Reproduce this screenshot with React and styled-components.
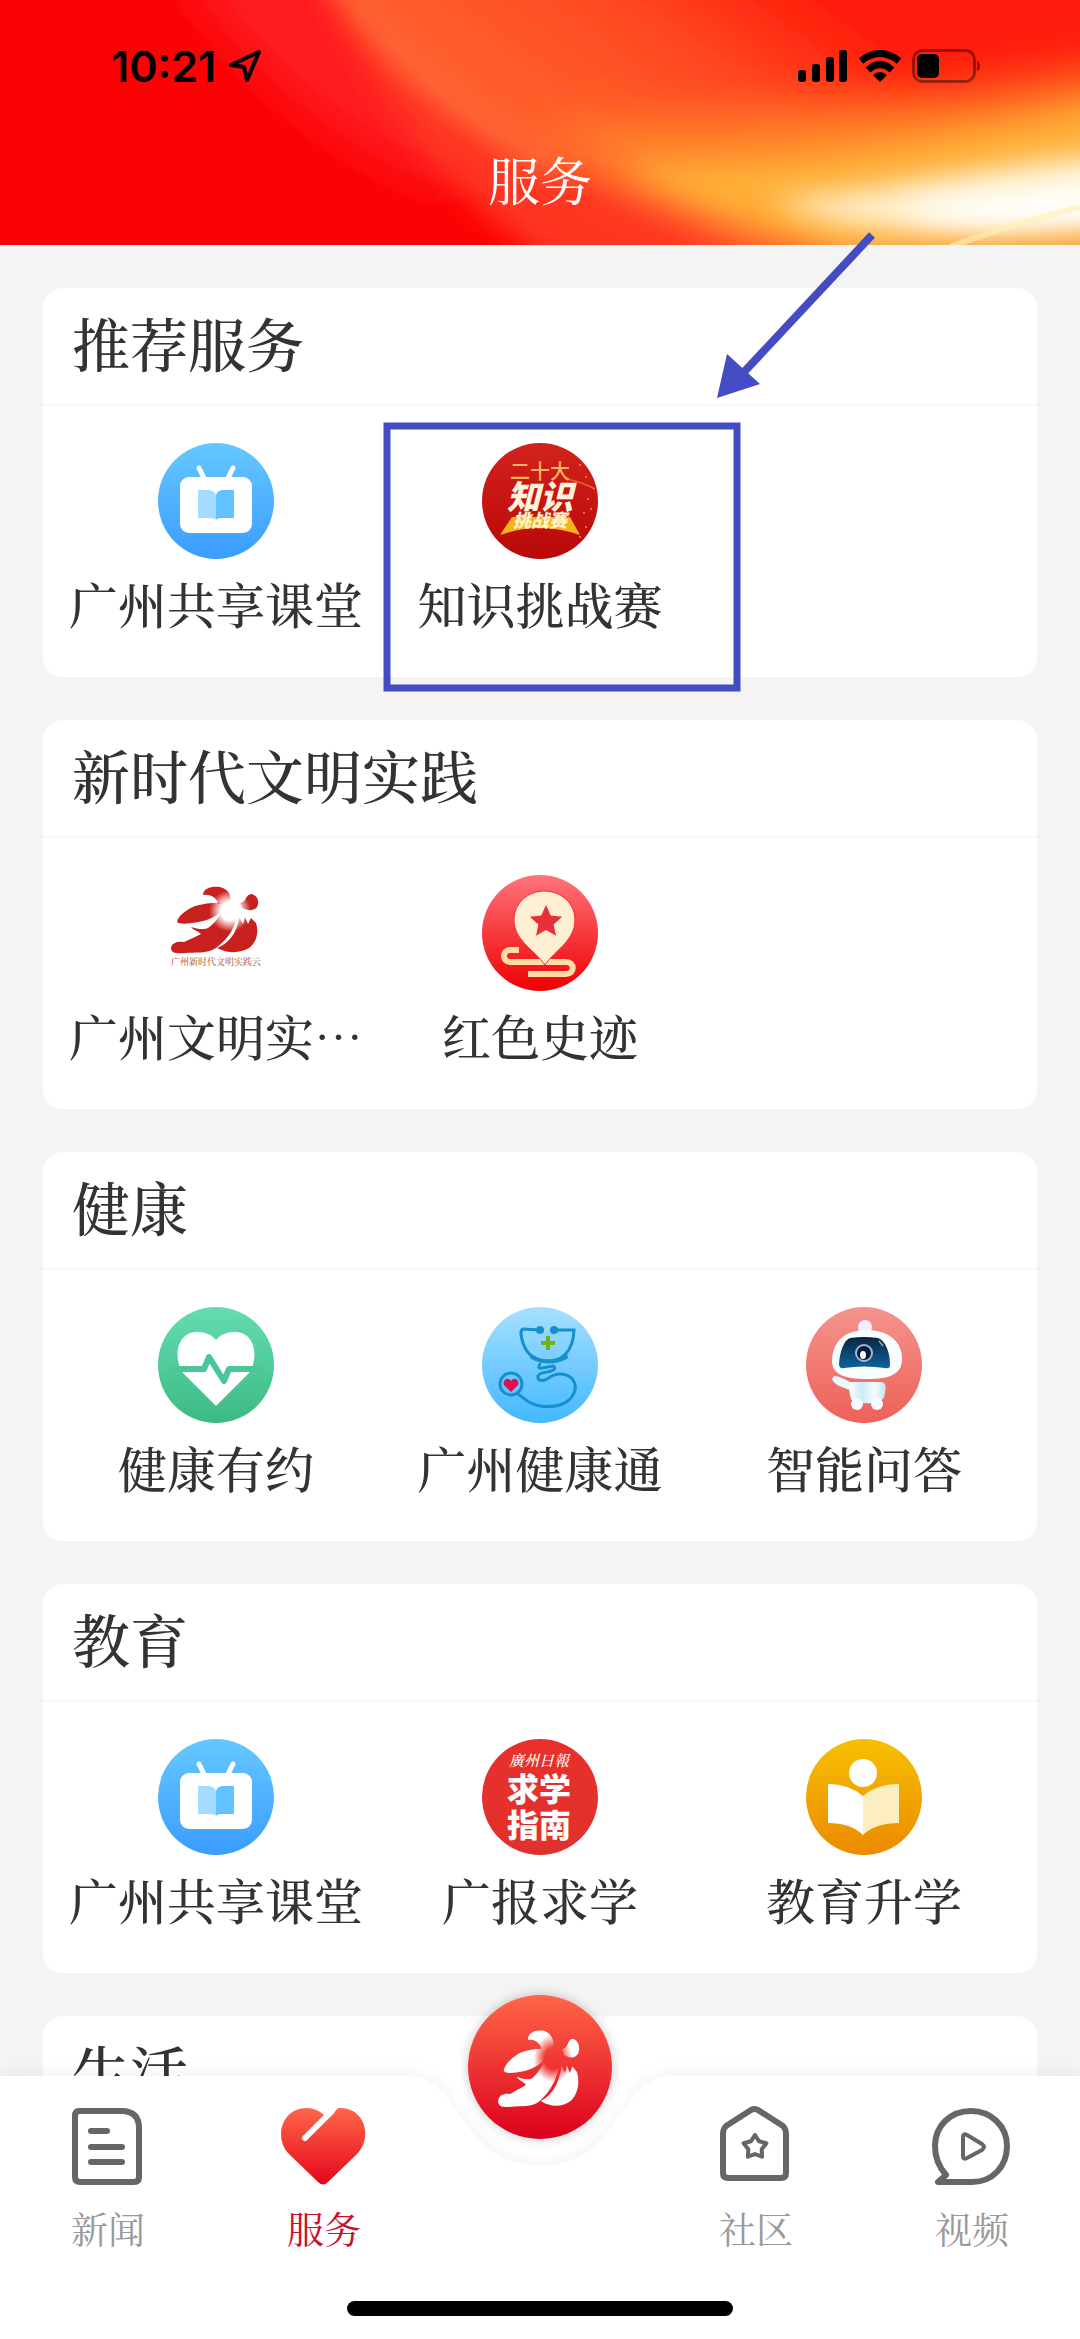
import React from 'react';
import styled, { createGlobalStyle } from 'styled-components';

const song =
	"'Noto Serif CJK SC', 'Source Han Serif SC', 'Songti SC', 'Noto Sans CJK SC', serif";
const hei = "'Noto Sans CJK SC', sans-serif";

const colors = {
	page: '#f4f4f4',
	card: '#fff',
	line: '#f7f7f7',
	text: '#333',
	muted: '#999',
	icon: '#666',
	active: '#c8102e',
	marker: '#444cc4',
};

const GlobalStyle = createGlobalStyle`
	* {
		box-sizing: border-box;
	}
	body {
		margin: 0;
		background: ${colors.page};
		font-family: ${song};
		font-weight: 500;
		color: ${colors.text};
	}
	button {
		border: 0;
		padding: 0;
		background: none;
		font: inherit;
		color: inherit;
	}
`;

const Page = styled.div`
	position: relative;
	height: 100vh;
	overflow: hidden;
`;

const Scroller = styled.div`
	height: 100%;
	overflow-y: auto;
	scrollbar-width: none;
`;

const Header = styled.header`
	position: relative;
	z-index: 0;
	padding: 44px 99px 36px 111px;
	background: #fb0202;
`;

const HeaderArt = styled.svg`
	position: absolute;
	z-index: -1;
	inset: 0;
	width: 100%;
	height: 100%;
`;

const StatusBar = styled.div`
	display: flex;
	align-items: center;
	justify-content: space-between;
	height: 44px;
	color: #000;
`;

const StatusGroup = styled.div`
	display: flex;
	align-items: center;
	gap: 11px;
`;

const Clock = styled.span`
	font: 600 43px/44px Inter, sans-serif;
`;

const PageTitle = styled.h1`
	margin: 61px 0 0 -12px;
	font-size: 52px;
	font-weight: 400;
	line-height: 60px;
	text-align: center;
	color: #fff;
`;

const Main = styled.main`
	display: flex;
	flex-direction: column;
	gap: 43px;
	padding: 43px;
`;

const Card = styled.section`
	min-height: 389px;
	border-radius: 20px;
	background: ${colors.card};
`;

const CardTitle = styled.h2`
	margin: 0;
	padding: 16px 29px 24px;
	font-size: 58px;
	font-weight: 500;
	line-height: 76px;
`;

const ServiceGrid = styled.div`
	display: grid;
	grid-template-columns: repeat(3, 1fr);
	border-top: 2px solid ${colors.line};
	padding: 37px 11px 44px;
`;

const ServiceCell = styled.div`
	position: relative;
	display: flex;
	justify-content: center;
`;

const ServiceButton = styled.button`
	display: flex;
	flex-direction: column;
	align-items: center;
	gap: 14px;
	font-size: 49px;
	line-height: 60px;
	white-space: nowrap;
`;

const ServiceIcon = styled.svg`
	display: block;
	width: 116px;
	height: 116px;
`;

const Marker = styled.svg`
	position: absolute;
	z-index: 1;
	left: 4px;
	top: -212px;
	width: 500px;
	height: 462px;
	pointer-events: none;
`;

const TabBar = styled.nav`
	position: absolute;
	z-index: 2;
	left: 0;
	right: 0;
	bottom: 0;
`;

const TabBackdrop = styled.div`
	position: absolute;
	z-index: -1;
	inset: 0;
	display: flex;
	filter: drop-shadow(0 -2px 8px rgba(0, 0, 0, 0.05));
`;

const BackdropSide = styled.div`
	flex: 1;
	background: ${colors.card};
`;

const TabList = styled.div`
	display: grid;
	grid-template-columns: repeat(5, 1fr);
	padding-top: 28px;
`;

const Tab = styled.button`
	display: flex;
	flex-direction: column;
	align-items: center;
	gap: 16px;
	font-size: 37px;
	font-weight: 400;
	line-height: 44px;
	color: ${props => (props.$active ? colors.active : colors.muted)};
`;

const CenterButton = styled.button`
	justify-self: center;
	width: 144px;
	height: 144px;
	margin-top: -109px;
	border-radius: 50%;
	box-shadow: 0 0 12px rgba(0, 0, 0, 0.22);
`;

const HomeIndicator = styled.div`
	width: 386px;
	height: 15px;
	margin: 51px auto 23px;
	border-radius: 8px;
	background: #000;
`;

const Gradient = ({ id, from, to }) => (
	<linearGradient id={id} x1='0' y1='0' x2='0' y2='1'>
		<stop offset='0' stopColor={from} />
		<stop offset='1' stopColor={to} />
	</linearGradient>
);

const Disc = ({ id, from, to }) => (
	<>
		<defs>
			<Gradient id={id} from={from} to={to} />
		</defs>
		<circle cx='58' cy='58' r='58' fill={`url(#${id})`} />
	</>
);

const starPoints = (cx, cy, outer, inner) =>
	Array.from({ length: 10 }, (_, i) => {
		const r = i % 2 ? inner : outer;
		const a = (Math.PI / 5) * i - Math.PI / 2;
		return `${(cx + r * Math.cos(a)).toFixed(1)},${(cy + r * Math.sin(a)).toFixed(1)}`;
	}).join(' ');

// kapok blossom, petals fade out towards the heart of the flower
const Kapok = ({ id, color }) => (
	<>
		<defs>
			<radialGradient id={id} gradientUnits='userSpaceOnUse' cx='72' cy='36' r='26'>
				<stop offset='0.35' stopColor={color} stopOpacity='0' />
				<stop offset='0.8' stopColor={color} />
			</radialGradient>
		</defs>
		<g fill={`url(#${id})`}>
			<path d='M45 20C45 13 54 11 62 12C70 14 74 20 72 27L60 29C59 23 53 19 45 20Z' />
			<path d='M82 28C89 27 87 20 93 19C99 20 102 26 99 32C96 36 90 36 84 33Z' />
			<path d='M19 47C20 41 28 35 37 31C47 28 58 27 68 28L62 38C54 44 44 47 34 48C27 49 21 49 19 47Z' />
			<path d='M33 52C39 54 46 55 50 53C57 48 60 43 63 38L78 44C76 54 70 64 58 73C48 79 38 77 27 78C19 79 13 78 13 73C14 67 21 66 26 67C32 64 38 62 43 59C40 56 35 55 33 52Z' />
			<path d='M81 42L85 49L87 42L90 49L93 43L98 48C101 57 99 67 91 73C83 78 70 79 59 73C69 69 79 60 81 42Z' />
		</g>
	</>
);

const TvIcon = ({ id }) => (
	<ServiceIcon viewBox='0 0 116 116' aria-hidden='true'>
		<Disc id={id} from='#66c8ff' to='#3a9cff' />
		<path
			d='M41 25L47 37M75 25L69 37'
			stroke='#fff'
			strokeWidth='5'
			strokeLinecap='round'
		/>
		<rect x='22' y='34' width='72' height='56' rx='9' fill='#fff' />
		<path d='M40 47H52Q57 48 58 52V77Q57 75 52 75H40Z' fill='#a3dcff' />
		<path d='M76 47H64Q59 48 58 52V77Q59 75 64 75H76Z' fill='#62c1ff' />
	</ServiceIcon>
);

const ChallengeIcon = () => (
	<ServiceIcon viewBox='0 0 116 116' aria-hidden='true'>
		<Disc id='challenge' from='#d4221c' to='#b80808' />
		<path d='M85 36Q100 39 113 46' stroke='#e8643c' strokeWidth='1.5' fill='none' />
		<g fill='#f08a4a'>
			<circle cx='98' cy='22' r='1' />
			<circle cx='104' cy='34' r='1' />
			<circle cx='106' cy='56' r='1' />
			<circle cx='109' cy='66' r='1' />
			<circle cx='102' cy='70' r='1' />
			<circle cx='104' cy='84' r='1' />
			<circle cx='98' cy='94' r='1' />
		</g>
		<path d='M30 74H88L98 92Q58 78 18 92Z' fill='#f6b21c' />
		<g textAnchor='middle' fontFamily={hei}>
			<text x='58' y='36' fontSize='20' fontWeight='500' fill='#f7b562'>
				二十大
			</text>
			<text x='58' y='66' fontSize='33' fontWeight='900' fontStyle='italic' fill='#fff3dc'>
				知识
			</text>
			<text x='58' y='84' fontSize='18' fontWeight='900' fontStyle='italic' fill='#fff3c8'>
				挑战赛
			</text>
		</g>
	</ServiceIcon>
);

const CivilIcon = () => (
	<ServiceIcon viewBox='0 0 116 116' aria-hidden='true'>
		<Kapok id='kapok-red' color='#c8201c' />
		<text x='58' y='90' fontSize='9' fill='#b8643c' textAnchor='middle' fontFamily={song}>
			广州新时代文明实践云
		</text>
	</ServiceIcon>
);

const HistoryIcon = () => (
	<ServiceIcon viewBox='0 0 116 116' aria-hidden='true'>
		<Disc id='history' from='#ff747a' to='#ee0004' />
		<path
			d='M37 75H28C20 75 20 87 28 87H84C93 87 93 99 84 99H46'
			fill='none'
			stroke='#ffdca4'
			strokeWidth='6'
		/>
		<path
			d='M63 90C54 76 32 66 32 45C32 28 46 16 62 16C79 16 93 28 93 45C93 66 72 76 63 90Z'
			fill='#ffefd2'
			stroke='#f42a2e'
			strokeWidth='1'
		/>
		<polygon points={starPoints(64, 47, 17, 8)} fill='#e83038' />
	</ServiceIcon>
);

const HeartbeatIcon = () => (
	<ServiceIcon viewBox='0 0 116 116' aria-hidden='true'>
		<Disc id='heartbeat' from='#64dcb0' to='#3cba84' />
		<path
			d='M58 99L25 66C15 52 18 25 39 25C48 25 54 28 58 33C62 28 68 25 77 25C98 25 101 52 91 66Z'
			fill='#fff'
		/>
		<path
			d='M16 62H46L51 50L66 74L71 62H100'
			fill='none'
			stroke='#4ac698'
			strokeWidth='6'
			strokeLinejoin='round'
		/>
	</ServiceIcon>
);

const StethoscopeIcon = () => (
	<ServiceIcon viewBox='0 0 116 116' aria-hidden='true'>
		<Disc id='stethoscope' from='#a6e0ff' to='#44b8ff' />
		<g fill='none' stroke='#1490cc' strokeWidth='3' strokeLinecap='round'>
			<path d='M58 23L41 22C38 23 39 30 41 36C45 48 54 54 66 54C80 54 91 45 92 23L72 23' />
			<path d='M50 50C60 56 74 56 84 50' strokeWidth='4' />
			<path d='M58 57C56 60 56 62 60 61L71 59C74 60 73 63 69 64C64 66 57 65 56 69C55 74 60 74 63 73C69 70 72 66 79 67C90 68 96 76 92 86C87 98 72 101 58 99C48 98 42 91 36 87' />
			<circle cx='29' cy='77' r='11' />
		</g>
		<circle cx='58' cy='23' r='4' fill='#1490cc' />
		<circle cx='72' cy='23' r='4' fill='#1490cc' />
		<path d='M66 29V43M59 36H73' stroke='#70b414' strokeWidth='4' />
		<path
			d='M29 85L22 78C20 73 26 69 29 74C32 69 38 73 36 78Z'
			fill='#e0104c'
		/>
	</ServiceIcon>
);

const RobotIcon = () => (
	<ServiceIcon viewBox='0 0 116 116' aria-hidden='true'>
		<Disc id='robot' from='#f4948c' to='#ee6058' />
		<defs>
			<Gradient id='visor' from='#0c2440' to='#0c64a0' />
			<linearGradient id='torso'>
				<stop offset='0' stopColor='#fff' />
				<stop offset='0.35' stopColor='#cdeaf8' />
				<stop offset='0.7' stopColor='#f4fbff' />
				<stop offset='1' stopColor='#c4e4f6' />
			</linearGradient>
		</defs>
		<circle cx='59' cy='20' r='7' fill='#f4ecff' />
		<path
			d='M60 23C82 23 96 34 96 52C96 67 84 72 61 72C38 72 26 67 26 54C26 34 40 23 60 23Z'
			fill='#f8fdff'
		/>
		<path
			d='M44 31Q58 29 72 31C80 34 84 46 84 58Q84 62 79 61Q58 58 38 61Q33 62 33 57C34 44 38 33 44 31Z'
			fill='url(#visor)'
		/>
		<circle cx='58' cy='46' r='8' fill='#081a3c' stroke='#a0b8dc' strokeWidth='2' />
		<ellipse cx='57' cy='48' rx='3' ry='4' fill='#fff' />
		<path d='M73 34L77 39' stroke='#8cb4a0' strokeWidth='1.5' />
		<path d='M28 69C34 69 40 73 46 76L44 83C36 80 28 78 26 72Z' fill='#eef8ff' />
		<path d='M44 75H76C81 76 80 84 78 90C76 98 48 98 45 92C43 86 43 80 44 75Z' fill='url(#torso)' />
		<circle cx='51' cy='97' r='6' fill='#f6fbff' />
		<circle cx='71' cy='97' r='6' fill='#f6fbff' />
	</ServiceIcon>
);

const StudyGuideIcon = () => (
	<ServiceIcon viewBox='0 0 116 116' aria-hidden='true'>
		<Disc id='guide' from='#e8302c' to='#e2302c' />
		<g textAnchor='middle' fill='#fff' fontFamily={hei}>
			<text x='57' y='27' fontSize='15' fontStyle='italic' fontFamily={song}>
				廣州日報
			</text>
			<text x='57' y='62' fontSize='32' fontWeight='900'>
				求学
			</text>
			<text x='57' y='98' fontSize='32' fontWeight='900'>
				指南
			</text>
		</g>
	</ServiceIcon>
);

const ReaderIcon = () => (
	<ServiceIcon viewBox='0 0 116 116' aria-hidden='true'>
		<Disc id='reader' from='#f6c000' to='#ec8a00' />
		<circle cx='57' cy='34' r='14' fill='#fff' />
		<path d='M22 45Q43 45 57 57V96Q45 84 22 84Z' fill='#fff' />
		<path d='M93 45Q71 45 57 57V96Q69 84 93 84Z' fill='#fdeebf' />
	</ServiceIcon>
);

const sections = [
	{
		title: '推荐服务',
		items: [
			{ label: '广州共享课堂', icon: <TvIcon id='tv-recommended' /> },
			{ label: '知识挑战赛', icon: <ChallengeIcon />, marked: true },
		],
	},
	{
		title: '新时代文明实践',
		items: [
			{ label: '广州文明实…', icon: <CivilIcon /> },
			{ label: '红色史迹', icon: <HistoryIcon /> },
		],
	},
	{
		title: '健康',
		items: [
			{ label: '健康有约', icon: <HeartbeatIcon /> },
			{ label: '广州健康通', icon: <StethoscopeIcon /> },
			{ label: '智能问答', icon: <RobotIcon /> },
		],
	},
	{
		title: '教育',
		items: [
			{ label: '广州共享课堂', icon: <TvIcon id='tv-education' /> },
			{ label: '广报求学', icon: <StudyGuideIcon /> },
			{ label: '教育升学', icon: <ReaderIcon /> },
		],
	},
	{ title: '生活', items: [] },
];

const HeaderBackground = () => (
	<HeaderArt viewBox='0 0 1080 245' preserveAspectRatio='none' aria-hidden='true'>
		<defs>
			<filter id='soft' x='-30%' y='-50%' width='160%' height='200%'>
				<feGaussianBlur stdDeviation='14' />
			</filter>
			<filter id='softer' x='-30%' y='-80%' width='160%' height='260%'>
				<feGaussianBlur stdDeviation='24' />
			</filter>
			<linearGradient
				id='flare'
				gradientUnits='userSpaceOnUse'
				x1='620'
				y1='150'
				x2='760'
				y2='-50'
			>
				<stop offset='0' stopColor='#ff5c2a' />
				<stop offset='0.5' stopColor='#ff4822' />
				<stop offset='1' stopColor='#ff1a08' />
			</linearGradient>
		</defs>
		<rect width='1080' height='245' fill='#fb0204' />
		<path
			d='M170 -40C240 60 310 130 440 190L600 60L420 -40Z'
			fill='#ff1a20'
			filter='url(#softer)'
		/>
		<path
			d='M310 -40C370 90 430 190 590 290H1200V-40Z'
			fill='#ff3420'
			filter='url(#soft)'
		/>
		<path
			d='M340 -40C390 60 460 120 560 165C680 215 760 260 820 300H1200V-40Z'
			fill='url(#flare)'
			filter='url(#soft)'
		/>
		<path
			d='M340 -30C385 50 450 105 560 165'
			fill='none'
			stroke='#ff6c38'
			strokeWidth='26'
			filter='url(#soft)'
		/>
		<path
			d='M540 130C700 125 900 112 1140 66V260H860C740 240 640 190 540 130Z'
			fill='#ff8a2c'
			filter='url(#softer)'
		/>
		<path
			d='M620 164C780 172 960 140 1140 100V260H880C780 235 700 208 620 164Z'
			fill='#ffb038'
			filter='url(#soft)'
		/>
		<path
			d='M770 200C860 195 980 165 1140 150V228C980 244 850 238 770 200Z'
			fill='#fff0cc'
			filter='url(#soft)'
		/>
		<path
			d='M900 208C960 196 1020 188 1120 180V222C1000 232 940 230 900 208Z'
			fill='#fff'
			filter='url(#soft)'
		/>
		<path
			d='M820 254C900 240 1000 250 1100 236V275H820Z'
			fill='#f8ac50'
			filter='url(#soft)'
		/>
		<path
			d='M950 247Q1000 228 1080 207'
			fill='none'
			stroke='#fff0b0'
			strokeOpacity='0.6'
			strokeWidth='6'
		/>
	</HeaderArt>
);

const LocationArrow = () => (
	<svg width='36' height='36' viewBox='0 0 36 36' aria-hidden='true'>
		<path
			d='M32 4L4 17L17 19L20 32Z'
			fill='none'
			stroke='#000'
			strokeWidth='4'
			strokeLinejoin='round'
		/>
	</svg>
);

const SignalIcon = () => (
	<svg width='50' height='32' viewBox='0 0 50 32' aria-hidden='true'>
		<rect x='0' y='20' width='8' height='12' rx='3' />
		<rect x='14' y='14' width='8' height='18' rx='3' />
		<rect x='28' y='7' width='8' height='25' rx='3' />
		<rect x='41' y='0' width='8' height='32' rx='3' />
	</svg>
);

const WifiIcon = () => (
	<svg width='42' height='32' viewBox='0 0 42 32' aria-hidden='true'>
		<g fill='none' stroke='#000' strokeWidth='7'>
			<path d='M2 11Q21 -4 40 11' />
			<path d='M9 20Q21 9 33 20' />
		</g>
		<path d='M14 25Q21 19 28 25L21 32Z' />
	</svg>
);

const BatteryIcon = () => (
	<svg width='69' height='34' viewBox='0 0 69 34' aria-hidden='true'>
		<rect
			x='1.5'
			y='1.5'
			width='61'
			height='31'
			rx='9'
			fill='none'
			stroke='#000'
			strokeOpacity='0.4'
			strokeWidth='3'
		/>
		<rect x='5' y='5' width='22' height='24' rx='5' />
		<path d='M65 12Q68 13 68 17T65 22Z' fillOpacity='0.5' />
	</svg>
);

const tabIconProps = {
	width: 86,
	height: 86,
	viewBox: '0 0 86 86',
	fill: 'none',
	stroke: colors.icon,
	strokeWidth: 6,
	strokeLinecap: 'round',
	strokeLinejoin: 'round',
	'aria-hidden': true,
};

const NewsIcon = () => (
	<svg {...tabIconProps}>
		<path d='M14 7H58Q74 8 74 24V73Q74 78 69 78H15Q10 78 10 73V12Q10 7 14 7Z' />
		<path d='M26 27H42M26 43H57M26 58H57' />
	</svg>
);

const ServiceTabIcon = () => (
	<svg {...tabIconProps} stroke='none'>
		<defs>
			<Gradient id='heart-tab' from='#ff6648' to='#e4061c' />
		</defs>
		<path
			d='M37 78L9 51C-8 35 0 4 26 4Q35 4 43 11Q50 4 59 4C85 4 92 35 75 51L47 78Q42 83 37 78Z'
			fill='url(#heart-tab)'
		/>
		<path d='M24 34L50 8L54 2' stroke='#fff' strokeWidth='6' />
		<path d='M41 9L48 0H60L50 12Z' fill='#fff' />
	</svg>
);

const CommunityIcon = () => (
	<svg {...tabIconProps}>
		<path d='M38 6Q42 4 45 6L70 22Q73 25 73 30V69Q73 74 68 74H15Q10 74 10 69V30Q10 25 13 22Z' />
		<polygon points={starPoints(42, 43, 12, 7)} strokeWidth='4' />
	</svg>
);

const VideoIcon = () => (
	<svg {...tabIconProps}>
		<path d='M9 78H43C64 78 78 62 78 42C78 22 62 7 42 7C21 7 6 22 6 42C6 54 10 63 17 71Z' />
		<path
			d='M34 33Q34 29 38 31L53 40Q57 43 53 46L38 54Q34 56 34 52Z'
			strokeWidth='4'
		/>
	</svg>
);

const tabs = [
	{ label: '新闻', icon: <NewsIcon /> },
	{ label: '服务', icon: <ServiceTabIcon />, active: true },
	{ center: true },
	{ label: '社区', icon: <CommunityIcon /> },
	{ label: '视频', icon: <VideoIcon /> },
];

const ServiceMarker = () => (
	<Marker viewBox='0 0 500 462' aria-hidden='true'>
		<rect
			x='5'
			y='195'
			width='350'
			height='262'
			fill='none'
			stroke={colors.marker}
			strokeWidth='7'
		/>
		<path d='M490 4L362 141' stroke={colors.marker} strokeWidth='8' />
		<polygon points='335,167 345,123 378,153' fill={colors.marker} />
	</Marker>
);

const ServiceCard = ({ title, items }) => (
	<Card>
		<CardTitle>{title}</CardTitle>
		{items.length > 0 && (
			<ServiceGrid>
				{items.map(item => (
					<ServiceCell key={item.label}>
						<ServiceButton type='button'>
							{item.icon}
							{item.label}
						</ServiceButton>
						{item.marked && <ServiceMarker />}
					</ServiceCell>
				))}
			</ServiceGrid>
		)}
	</Card>
);

const BottomTabs = () => (
	<TabBar>
		<TabBackdrop>
			<BackdropSide />
			<svg width='270' height='263' viewBox='0 0 270 263' aria-hidden='true'>
				<path
					d='M0 0C32 0 42 22 58 43C76 72 100 90 135 90C170 90 194 72 212 43C228 22 238 0 270 0V263H0Z'
					fill={colors.card}
				/>
			</svg>
			<BackdropSide />
		</TabBackdrop>
		<TabList>
			{tabs.map(tab =>
				tab.center ? (
					<CenterButton key='center' type='button' aria-label='新时代文明实践'>
						<svg width='144' height='144' viewBox='0 0 144 144'>
							<defs>
								<Gradient id='center' from='#ff6648' to='#dc001c' />
							</defs>
							<circle cx='72' cy='72' r='72' fill='url(#center)' />
							<g transform='translate(18 22) scale(0.93 1.15)'>
								<Kapok id='kapok-white' color='#fff' />
							</g>
						</svg>
					</CenterButton>
				) : (
					<Tab key={tab.label} type='button' $active={tab.active}>
						{tab.icon}
						{tab.label}
					</Tab>
				)
			)}
		</TabList>
		<HomeIndicator />
	</TabBar>
);

const App = () => (
	<Page lang='zh-CN'>
		<GlobalStyle />
		<Scroller>
			<Header>
				<HeaderBackground />
				<StatusBar>
					<StatusGroup>
						<Clock>10:21</Clock>
						<LocationArrow />
					</StatusGroup>
					<StatusGroup>
						<SignalIcon />
						<WifiIcon />
						<BatteryIcon />
					</StatusGroup>
				</StatusBar>
				<PageTitle>服务</PageTitle>
			</Header>
			<Main>
				{sections.map(section => (
					<ServiceCard key={section.title} {...section} />
				))}
			</Main>
		</Scroller>
		<BottomTabs />
	</Page>
);

export default App;
